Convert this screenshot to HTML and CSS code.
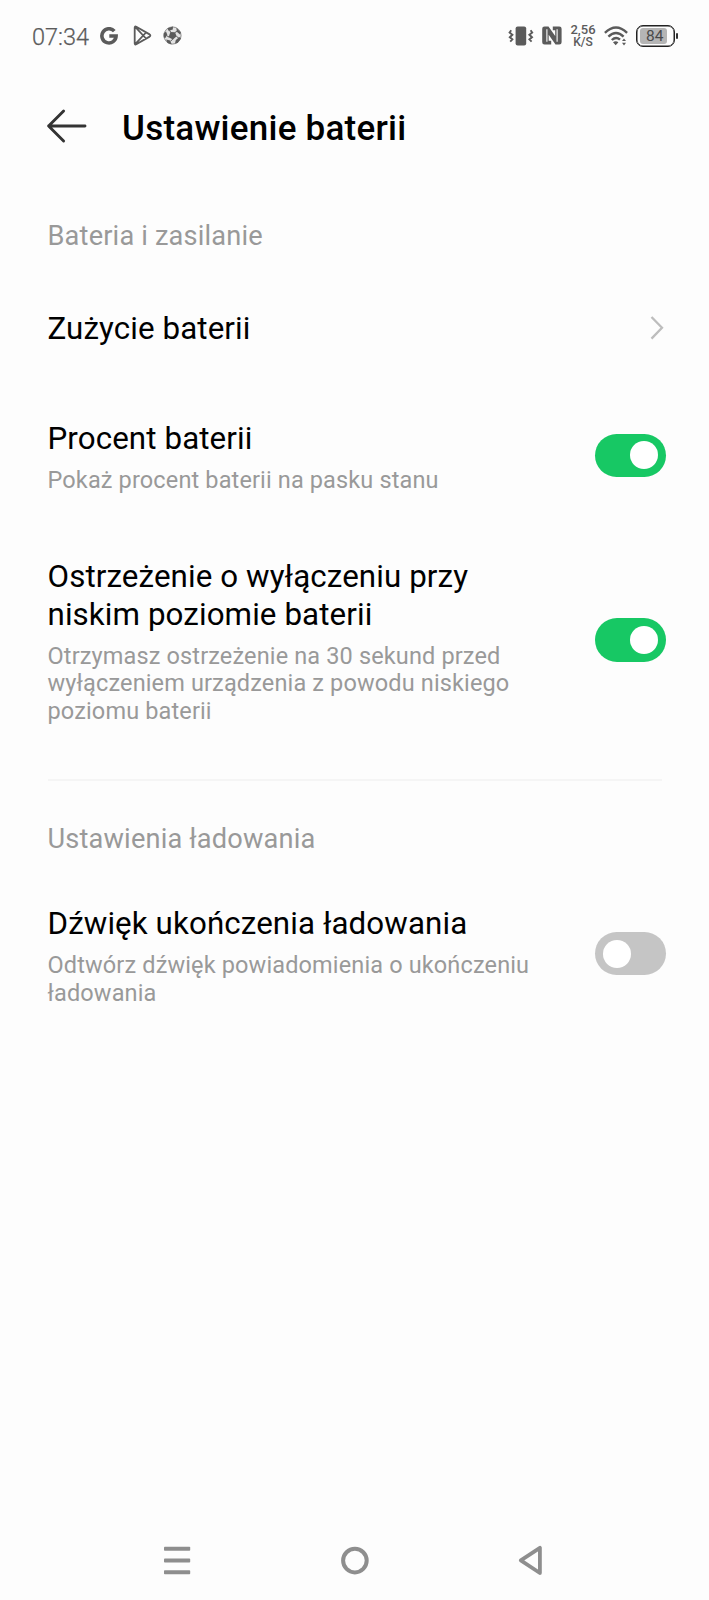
FILE: index.html
```html
<!DOCTYPE html>
<html lang="pl">
<head>
<meta charset="utf-8">
<title>Ustawienie baterii</title>
<link rel="stylesheet" href="styles.css">
</head>
<body>
<div class="screen">
  <div class="status">
    <div class="status-left">
      <span class="clock">07:34</span>
      <svg class="ic-g" width="18" height="18" viewBox="0 0 18 18"><path d="M14.3 4.1A7.1 7.1 0 1 0 16.1 9H9.3" fill="none" stroke="#5b5b5b" stroke-width="3.6"/></svg>
      <svg class="ic-play" width="19" height="21" viewBox="0 0 19 21"><path d="M1.7 2.6V18.4Q1.8 20 3.3 19.3L16.6 11.6Q18.1 10.5 16.6 9.4L3.3 1.7Q1.8 1 1.7 2.6ZM2.2 1.8L13 13.5M2.2 19.2L13 7.5" fill="none" stroke="#5b5b5b" stroke-width="1.8" stroke-linejoin="round"/></svg>
      <svg class="ic-ball" width="19" height="19" viewBox="0 0 19 19"><circle cx="9.5" cy="9.5" r="8.6" fill="#e2e2e2" stroke="#777" stroke-width=".8"/><g fill="#5b5b5b"><path d="M7.4 5.9L12 6.2L13.6 10.2L10 13.6L5.6 11.2Z"/><path d="M4.5 2.2L10 .6L9.8 3.4L5.5 4.8Z"/><path d="M13.4 1.8L17.9 6.5L17 8.6L13.8 5.8Z"/><path d="M.6 7.4L3 5.6L4.3 8.8L2.3 12L.8 11.6Z"/><path d="M3.2 13.5L7.2 14.5L8.6 18.4L4.5 17Z"/><path d="M12.8 14L16.5 11L18 12.4L14.6 17L12 17.6Z"/></g><path d="M7.6 6.2L6.5 4M12 6.5L14.3 5.2M13.4 10.4L15.8 12M9.8 13L7.5 15.3M6 11L3.5 9.6" stroke="#5b5b5b"/></svg>
    </div>
    <div class="status-right">
      <svg width="26" height="20" viewBox="0 0 26 20" fill="none" stroke="#5b5b5b" stroke-width="1.9"><rect x="7.6" y=".5" width="10.6" height="19" rx="2" fill="#5b5b5b" stroke="none"/><path d="M3.2 4.3L1.6 6.5L4.4 8.8L1.8 11.2L4.4 13.4L2.2 15.6M22.6 4.3L24.2 6.5L21.4 8.8L24 11.2L21.4 13.4L23.6 15.6"/></svg>
      <svg class="ic-nfc" width="20" height="19" viewBox="0 0 20 19"><path d="M2.5.5H6.5L13.2 10V4.2H10.8V.5H17.3Q19.6.5 19.6 2.8V16.2Q19.6 18.5 17.3 18.5H13.5L6.7 8.8V14.8H9.2V18.5H2.5Q.2 18.5 .2 16.2V2.8Q.2.5 2.5.5Z" fill="#5b5b5b"/><path d="M4.9 3.2V15.7M15.1 3.2V15.7" stroke="#fdfdfd" stroke-width="1.1"/></svg>
      <div class="speed"><span>2,56</span><span>K/S</span></div>
      <svg class="ic-wifi" width="24" height="20" viewBox="0 0 24 20"><g fill="none" stroke="#5b5b5b" stroke-width="2.4"><path d="M.9 6.8Q12-3.6 23.1 6.8"/><path d="M4.4 10.6Q12 3.2 19.6 10.6"/><path d="M7.8 14Q12 10 16 13.7"/></g><path d="M9 16.2Q11.7 14.2 14.4 16.2L11.7 19.3ZM18 15L20 12.4L22 15ZM18 16.7H22L20 19.4Z" fill="#5b5b5b"/></svg>
      <div class="battery"><div class="charge">84</div></div>
      <div class="battery-tip"></div>
    </div>
  </div>

  <header class="header">
    <svg class="back" width="42" height="36" viewBox="0 0 42 36" fill="none" stroke="#333" stroke-width="2.9" stroke-linecap="round" stroke-linejoin="round"><path d="M39 18H2.6M17.6 3L2.6 18L17.6 33"/></svg>
    <h1 class="title">Ustawienie baterii</h1>
  </header>

  <main class="content">
    <h2 class="section section-power">Bateria i zasilanie</h2>
    <div class="row row-usage">
      <div class="label">Zużycie baterii</div>
      <svg class="chevron" width="14" height="26" viewBox="0 0 14 26" fill="none" stroke="#bdbdbd" stroke-width="2.3"><path d="M1.5 2L12 12.8L1.5 23.6"/></svg>
    </div>
    <div class="row row-percent">
      <div class="text">
        <div class="label">Procent baterii</div>
        <div class="hint">Pokaż procent baterii na pasku stanu</div>
      </div>
      <div class="toggle on"><div class="knob"></div></div>
    </div>
    <div class="row row-warning">
      <div class="text">
        <div class="label">Ostrzeżenie o wyłączeniu przy<br>niskim poziomie baterii</div>
        <div class="hint">Otrzymasz ostrzeżenie na 30 sekund przed<br>wyłączeniem urządzenia z powodu niskiego<br>poziomu baterii</div>
      </div>
      <div class="toggle on"><div class="knob"></div></div>
    </div>
    <div class="divider"></div>
    <h2 class="section section-charge">Ustawienia ładowania</h2>
    <div class="row row-sound">
      <div class="text">
        <div class="label">Dźwięk ukończenia ładowania</div>
        <div class="hint">Odtwórz dźwięk powiadomienia o ukończeniu<br>ładowania</div>
      </div>
      <div class="toggle"><div class="knob"></div></div>
    </div>
  </main>

  <nav class="nav">
    <svg width="30" height="32" viewBox="0 0 30 32"><g fill="#8e8e8e"><rect x="2" y="2.8" width="26.2" height="4" rx=".8"/><rect x="2" y="14.6" width="26.2" height="4" rx=".8"/><rect x="2" y="26.3" width="26.2" height="4" rx=".8"/></g></svg>
    <svg width="30" height="32" viewBox="0 0 30 32"><circle cx="14.9" cy="16.6" r="11.8" fill="none" stroke="#8e8e8e" stroke-width="4"/></svg>
    <svg width="30" height="32" viewBox="0 0 30 32"><path d="M3.8 16.4L22.9 3.8V29Z" fill="none" stroke="#8e8e8e" stroke-width="3.8" stroke-linejoin="round"/></svg>
  </nav>
</div>
</body>
</html>
```
FILE: styles.css
```css
* { box-sizing: border-box; }
body { margin: 0; background: #fdfdfd; font-family: Roboto, "Noto Sans", sans-serif; color: #000; }
svg { display: block; flex: none; }
.screen { width: 709px; height: 1600px; display: flex; flex-direction: column; }

.status { height: 71px; padding: 0 31px 0 32px; display: flex; justify-content: space-between; align-items: center; color: #5b5b5b; }
.status-left, .status-right { display: flex; align-items: center; }
.clock { font-size: 23.5px; font-weight: 300; line-height: 28px; width: 68px; margin-top: 2px; white-space: nowrap; -webkit-text-stroke: .25px #5b5b5b; }
.ic-play { margin-left: 15px; }
.ic-ball { margin-left: 11px; }
.ic-nfc { margin-left: 8px; }
.speed { width: 26px; margin-left: 8px; display: flex; flex-direction: column; align-items: center; font-size: 13px; font-weight: 500; line-height: 12px; }
.speed span + span { font-size: 12px; }
.ic-wifi { margin-left: 8px; }
.battery { width: 39px; height: 22px; margin-left: 8px; padding: 2px; border: 1.5px solid #222; border-radius: 7px; box-shadow: inset 0 0 0 .5px #222; }
.charge { width: 27px; height: 16px; margin: 0 1px; padding-left: 6px; background: #b5b5b5; border-radius: 3px; font-size: 15.5px; line-height: 16px; color: #4a4a4a; }
.battery-tip { width: 2px; height: 6px; margin-left: 1px; background: #333; border-radius: 1px; }

.header { height: 112px; padding: 0 46px; display: flex; align-items: center; gap: 34px; }
.back { margin-bottom: 2px; }
.title { margin: 3px 0 0; font-size: 35px; font-weight: 500; line-height: 42px; letter-spacing: .24px; }

.content { flex: 1; padding: 0 43.5px 0 47.5px; }
.section { margin: 0; font-size: 27.2px; font-weight: 400; line-height: 32px; letter-spacing: .17px; color: #999; }
.section-power { margin-top: 37px; }
.section-charge { margin-top: 42px; }
.row { display: flex; justify-content: space-between; align-items: center; }
.row-usage { margin-top: 58px; }
.row-percent { margin-top: 72px; }
.row-warning { margin-top: 64px; }
.row-sound { margin-top: 50px; }
.label { font-size: 31.3px; line-height: 37.5px; letter-spacing: .1px; white-space: nowrap; }
.hint { margin-top: 9.5px; font-size: 23.5px; line-height: 27.5px; letter-spacing: .14px; color: #999; white-space: nowrap; }
.chevron { margin: 0 1.5px 1px 0; }
.toggle { width: 71px; height: 43.5px; padding: 0 8px; margin-bottom: 3px; flex: none; display: flex; align-items: center; border-radius: 22px; background: #c5c5c5; }
.row-sound .toggle { margin-bottom: 5px; }
.toggle.on { background: #17c864; justify-content: flex-end; }
.knob { width: 28px; height: 28px; border-radius: 50%; background: #fff; }
.divider { height: 2px; margin: 54px 4px 0 .5px; background: #f5f5f5; }

.nav { height: 80px; padding: 0 162px; display: flex; justify-content: space-between; align-items: center; }
```
